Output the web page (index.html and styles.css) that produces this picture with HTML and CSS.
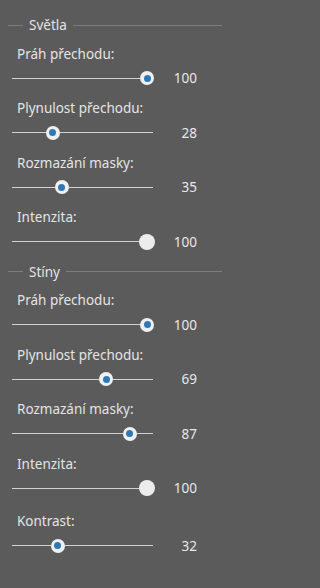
FILE: index.html
```html
<!DOCTYPE html>
<html lang="cs">
<head>
<meta charset="utf-8">
<link rel="stylesheet" href="styles.css">
</head>
<body>
<div class="panel">
  <section class="group">
    <div class="group-title"><span>Světla</span></div>
    <div class="row"><div class="label">Práh přechodu:</div>
      <div class="ctl"><div class="slider"><span class="knob" style="--v:100"></span></div><span class="val">100</span></div></div>
    <div class="row"><div class="label">Plynulost přechodu:</div>
      <div class="ctl"><div class="slider"><span class="knob" style="--v:28"></span></div><span class="val">28</span></div></div>
    <div class="row"><div class="label">Rozmazání masky:</div>
      <div class="ctl"><div class="slider"><span class="knob" style="--v:35"></span></div><span class="val">35</span></div></div>
    <div class="row"><div class="label">Intenzita:</div>
      <div class="ctl"><div class="slider"><span class="knob plain" style="--v:100"></span></div><span class="val">100</span></div></div>
  </section>
  <section class="group">
    <div class="group-title"><span>Stíny</span></div>
    <div class="row"><div class="label">Práh přechodu:</div>
      <div class="ctl"><div class="slider"><span class="knob" style="--v:100"></span></div><span class="val">100</span></div></div>
    <div class="row"><div class="label">Plynulost přechodu:</div>
      <div class="ctl"><div class="slider"><span class="knob" style="--v:69"></span></div><span class="val">69</span></div></div>
    <div class="row"><div class="label">Rozmazání masky:</div>
      <div class="ctl"><div class="slider"><span class="knob" style="--v:87"></span></div><span class="val">87</span></div></div>
    <div class="row"><div class="label">Intenzita:</div>
      <div class="ctl"><div class="slider"><span class="knob plain" style="--v:100"></span></div><span class="val">100</span></div></div>
  </section>
  <div class="row extra"><div class="label">Kontrast:</div>
    <div class="ctl"><div class="slider"><span class="knob" style="--v:32"></span></div><span class="val">32</span></div></div>
</div>
</body>
</html>
```
FILE: styles.css
```css
html, body {
  margin: 0;
  background: #5b5b5b;
}
body {
  width: 225px;
  height: 588px;
  overflow: hidden;
  font-family: "Noto Sans", "DejaVu Sans", sans-serif;
  font-size: 13.5px;
  color: #e4e4e4;
}
.panel {
  padding-top: 16px;
}
.group-title {
  display: flex;
  align-items: center;
  gap: 6px;
  height: 18px;
  padding: 0 3px 0 8px;
  margin-bottom: 10.5px;
}
.group-title::before {
  content: "";
  width: 15px;
  height: 1px;
  background: #7c7c7c;
}
.group-title::after {
  content: "";
  flex: 1;
  height: 1px;
  background: #7c7c7c;
}
.group + .group {
  margin-top: 3px;
}
.row {
  display: flex;
  flex-direction: column;
  gap: 4px;
  margin-bottom: 10.5px;
}
.row.extra {
  margin-top: 13.5px;
}
.label {
  height: 18px;
  line-height: 18px;
  padding-left: 17px;
  white-space: nowrap;
}
.ctl {
  display: flex;
  align-items: center;
  height: 22px;
  padding-left: 12px;
}
.slider {
  position: relative;
  width: 141px;
  height: 22px;
}
.slider::before {
  content: "";
  position: absolute;
  left: 0;
  right: 0;
  top: 11px;
  height: 1px;
  background: #d2d2d2;
}
.knob {
  position: absolute;
  top: 4.5px;
  left: calc(var(--v) * 1.31px - 3px);
  width: 14px;
  height: 14px;
  border-radius: 50%;
  background: #f0f0f0;
  display: flex;
  align-items: center;
  justify-content: center;
}
.knob::after {
  content: "";
  width: 7px;
  height: 7px;
  border-radius: 50%;
  background: #2f78b8;
}
.knob.plain {
  top: 3.5px;
  left: calc(var(--v) * 1.31px - 4px);
  width: 16px;
  height: 16px;
  background: #ececec;
}
.knob.plain::after {
  display: none;
}
.val {
  width: 44px;
  text-align: right;
  color: #e8e8e8;
  margin-top: 1px;
}
```
